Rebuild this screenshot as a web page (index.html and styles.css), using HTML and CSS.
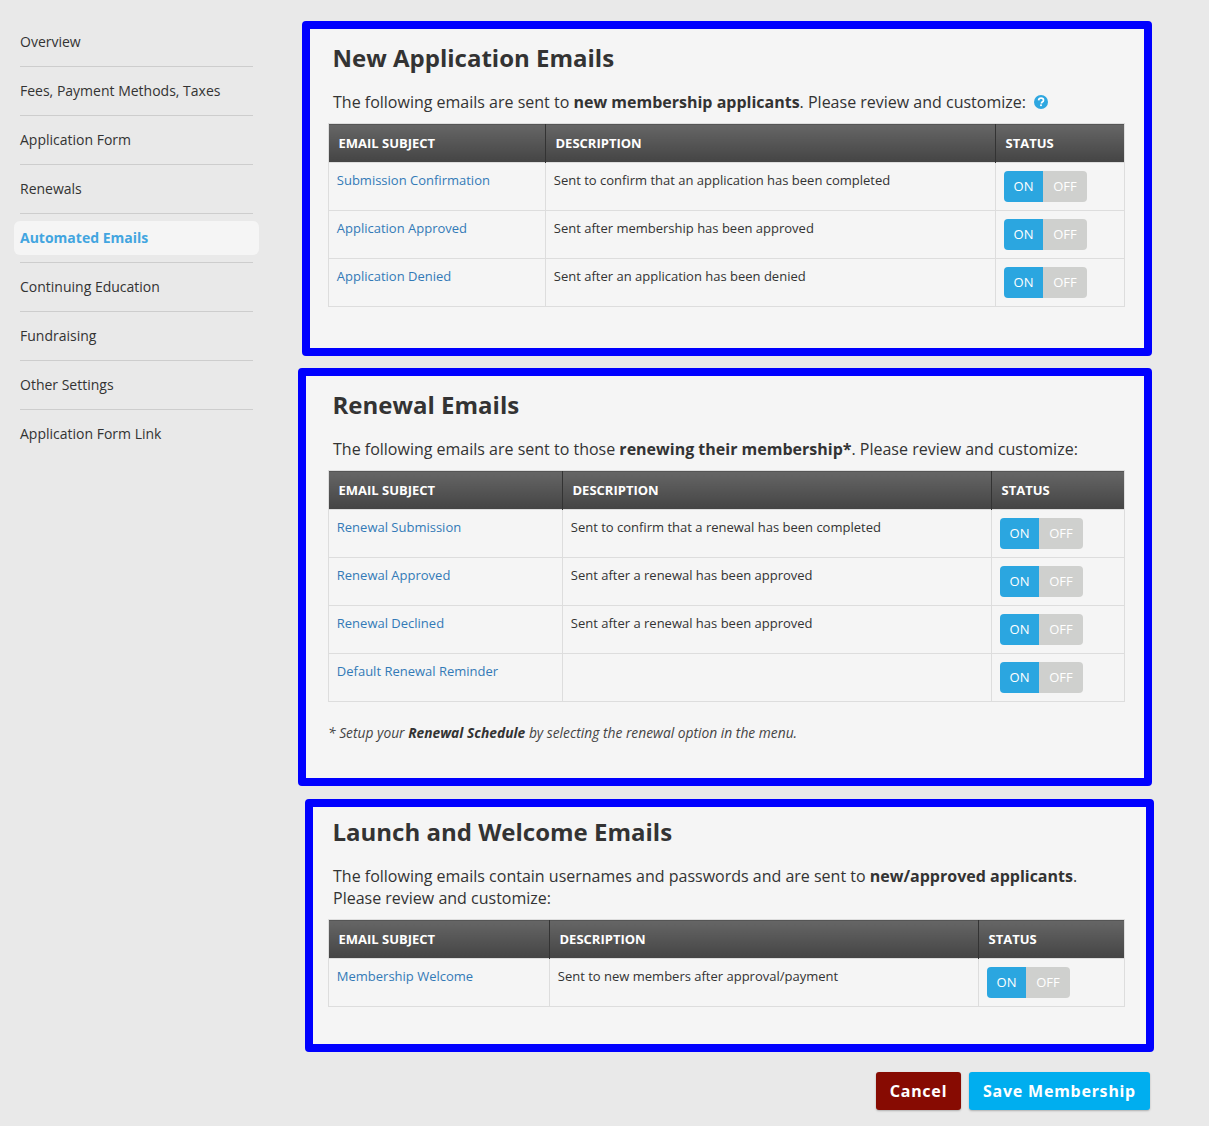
FILE: index.html
```html
<!DOCTYPE html>
<html lang="en">
<head>
<meta charset="utf-8">
<title>Automated Emails</title>
<link rel="stylesheet" href="styles.css">
</head>
<body>
<div class="page">
  <nav class="side">
    <a class="side-item">Overview</a>
    <a class="side-item">Fees, Payment Methods, Taxes</a>
    <a class="side-item">Application Form</a>
    <a class="side-item">Renewals</a>
    <a class="side-item active"><span class="pill">Automated Emails</span></a>
    <a class="side-item">Continuing Education</a>
    <a class="side-item">Fundraising</a>
    <a class="side-item">Other Settings</a>
    <a class="side-item last">Application Form Link</a>
  </nav>
  <main class="main">
    <section class="box box-a">
      <h2>New Application Emails</h2>
      <p class="lead">The following emails are sent to <b>new membership applicants</b>. Please review and customize: <svg class="help" viewBox="0 0 14 14" width="14" height="14" aria-hidden="true"><circle cx="7" cy="7" r="7" fill="#2ea7e0"/><path d="M4.6 5.4C4.7 4 5.7 3.2 7.1 3.2c1.4 0 2.4.8 2.4 2 0 .9-.5 1.4-1.2 1.8-.6.4-.8.6-.8 1.2v.3" fill="none" stroke="#fff" stroke-width="1.7"/><rect x="6.1" y="9.4" width="1.8" height="1.7" fill="#fff"/></svg></p>
      <table class="tbl">
        <colgroup><col class="c-a1"><col class="c-a2"><col></colgroup>
        <thead><tr><th>EMAIL SUBJECT</th><th>DESCRIPTION</th><th>STATUS</th></tr></thead>
        <tbody>
          <tr><td><a>Submission Confirmation</a></td><td>Sent to confirm that an application has been completed</td><td><div class="sw"><span class="on">ON</span><span class="off">OFF</span></div></td></tr>
          <tr><td><a>Application Approved</a></td><td>Sent after membership has been approved</td><td><div class="sw"><span class="on">ON</span><span class="off">OFF</span></div></td></tr>
          <tr><td><a>Application Denied</a></td><td>Sent after an application has been denied</td><td><div class="sw"><span class="on">ON</span><span class="off">OFF</span></div></td></tr>
        </tbody>
      </table>
    </section>
    <section class="box box-b">
      <h2>Renewal Emails</h2>
      <p class="lead">The following emails are sent to those <b>renewing their membership*</b>. Please review and customize:</p>
      <table class="tbl">
        <colgroup><col class="c-b1"><col class="c-b2"><col></colgroup>
        <thead><tr><th>EMAIL SUBJECT</th><th>DESCRIPTION</th><th>STATUS</th></tr></thead>
        <tbody>
          <tr><td><a>Renewal Submission</a></td><td>Sent to confirm that a renewal has been completed</td><td><div class="sw"><span class="on">ON</span><span class="off">OFF</span></div></td></tr>
          <tr><td><a>Renewal Approved</a></td><td>Sent after a renewal has been approved</td><td><div class="sw"><span class="on">ON</span><span class="off">OFF</span></div></td></tr>
          <tr><td><a>Renewal Declined</a></td><td>Sent after a renewal has been approved</td><td><div class="sw"><span class="on">ON</span><span class="off">OFF</span></div></td></tr>
          <tr><td><a>Default Renewal Reminder</a></td><td></td><td><div class="sw"><span class="on">ON</span><span class="off">OFF</span></div></td></tr>
        </tbody>
      </table>
      <p class="note">* Setup your <b>Renewal Schedule</b> by selecting the renewal option in the menu.</p>
    </section>
    <section class="box box-c">
      <h2>Launch and Welcome Emails</h2>
      <p class="lead">The following emails contain usernames and passwords and are sent to <b>new/approved applicants</b>. Please review and customize:</p>
      <table class="tbl">
        <colgroup><col class="c-c1"><col class="c-c2"><col></colgroup>
        <thead><tr><th>EMAIL SUBJECT</th><th>DESCRIPTION</th><th>STATUS</th></tr></thead>
        <tbody>
          <tr><td><a>Membership Welcome</a></td><td>Sent to new members after approval/payment</td><td><div class="sw"><span class="on">ON</span><span class="off">OFF</span></div></td></tr>
        </tbody>
      </table>
    </section>
    <div class="actions">
      <button class="btn cancel">Cancel</button>
      <button class="btn save">Save Membership</button>
    </div>
  </main>
</div>
</body>
</html>
```
FILE: styles.css
```css
* { box-sizing: border-box; }
html, body { margin: 0; padding: 0; }
body {
  background: #e9e9e9;
  font-family: "Open Sans", sans-serif;
  color: #333;
  height: 1126px;
  overflow: hidden;
}
.page { display: flex; align-items: flex-start; }
.side {
  width: 298px;
  flex: none;
  padding: 18px 45px 0 20px;
  display: flex;
  flex-direction: column;
}
.side-item {
  display: block;
  height: 49px;
  border-bottom: 1px solid #cdcdcd;
  font-size: 14px;
  line-height: 48px;
  color: #333;
  white-space: nowrap;
}
.side-item.last { border-bottom: 0; }
.side-item.active { padding: 7px 0 0; line-height: 34px; }
.pill {
  display: block;
  margin: 0 -6px;
  padding: 0 6px;
  height: 34px;
  background: #f5f5f5;
  border-radius: 6px;
  color: #42a5e0;
  font-weight: 700;
}
.main { flex: none; padding-top: 21px; width: 860px; }
.box {
  border: 8px solid #0000ff;
  border-radius: 4px;
  background: #f5f5f5;
}
.box-a { margin-left: 4px; width: 850px; height: 335px; padding: 0 19px 0 18px; }
.box-b { margin-top: 12px; width: 854px; height: 418px; padding: 0 19px 0 22px; }
.box-c { margin: 13px 0 0 7px; width: 849px; height: 253px; padding: 0 21px 0 15px; }
.box h2 {
  margin: 0 0 0 4.5px;
  padding-top: 11px;
  font-size: 24px;
  line-height: 36px;
  font-weight: 700;
  color: #333;
}
.box-c h2 { padding-top: 7px; }
.lead {
  margin: 15px 0 10px 5px;
  font-size: 16px;
  line-height: 22px;
  color: #333;
}
.lead b { font-weight: 700; }
.help { vertical-align: -1px; margin-left: 3.5px; }
.tbl {
  width: 797px;
  table-layout: fixed;
  border-collapse: collapse;
  font-size: 13px;
}
.c-a1 { width: 217px; }
.c-a2 { width: 450px; }
.c-b1 { width: 234px; }
.c-b2 { width: 429px; }
.c-c1 { width: 221px; }
.c-c2 { width: 429px; }
.tbl th {
  height: 39px;
  padding: 0 10px 0 9.5px;
  text-align: left;
  font-size: 13px;
  font-weight: 700;
  color: #fff;
  background: linear-gradient(#666, #444);
  border-top: 1px solid #ddd;
  border-left: 1px solid #333;
}
.tbl th:first-child { border-left: 1px solid #ddd; }
.tbl th:last-child { border-right: 1px solid #ddd; }
.tbl td {
  height: 48px;
  padding: 7px 8px 7px 7.8px;
  vertical-align: top;
  border: 1px solid #ddd;
  line-height: 20px;
  color: #333;
}
.tbl td a { color: #337ab7; }
.sw {
  display: flex;
  width: 83px;
  height: 31px;
  margin: 1px 0 0 0.2px;
  border-radius: 4px;
  overflow: hidden;
  font-size: 13px;
  line-height: 31px;
  color: #fff;
  text-align: center;
}
.sw .on { width: 39px; background: #2ba6e0; }
.sw .off { width: 44px; background: #cfd0ce; }
.note {
  margin: 21px 0 0;
  font-size: 13.8px;
  line-height: 20px;
  font-style: italic;
  color: #444;
}
.note b { font-weight: 700; color: #333; }
.actions {
  display: flex;
  justify-content: flex-end;
  gap: 8px;
  margin-top: 20px;
  padding-right: 8px;
}
.btn {
  height: 38px;
  border: 0;
  border-radius: 3px;
  font-family: "Noto Sans", sans-serif;
  font-size: 16px;
  font-weight: 700;
  letter-spacing: 0.75px;
  color: #fff;
  box-shadow: 0 1px 2px rgba(0,0,0,.25);
  padding: 0;
}
.cancel { width: 85px; background: #870b02; }
.save { width: 181px; background: #00aeef; }
```
